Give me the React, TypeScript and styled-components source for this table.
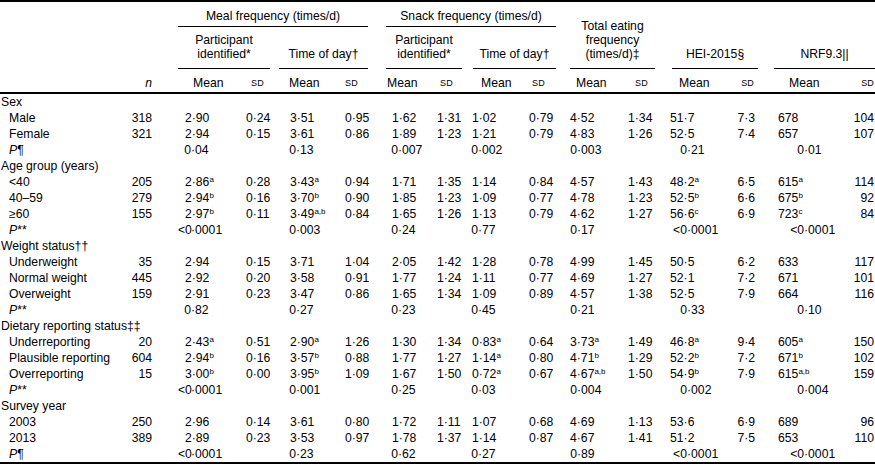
import React from "react";
import styled, { createGlobalStyle } from "styled-components";

const GlobalStyle = createGlobalStyle`
  html, body { margin: 0; padding: 0; background: #fff; }
  body { font-family: "Liberation Sans", Arial, Helvetica, sans-serif; color: #000; }
`;

const Frame = styled.div`
  width: 875px;
  border-top: 2px solid #000;
  border-bottom: 2px solid #000;
`;

const Table = styled.table`
  width: 875px;
  border-collapse: collapse;
  table-layout: fixed;
  font-size: 12.2px;
  color: #000;
`;

const Col = styled.col<{ $w: number }>`
  width: ${(p) => p.$w}px;
`;

const Head = styled.thead`
  border-bottom: 2px solid #000;
`;

const GroupTh = styled.th<{ $pt: number }>`
  padding: ${(p) => p.$pt}px 0 0 0;
  vertical-align: bottom;
  font-weight: normal;
  line-height: 14px;
  white-space: nowrap;
`;

const Ruled = styled.div<{ $ml?: number; $mr?: number; $pb?: number }>`
  margin: 0 ${(p) => p.$mr ?? 0}px 0 ${(p) => p.$ml ?? 0}px;
  padding-bottom: ${(p) => p.$pb ?? 5}px;
  border-bottom: 1px solid #000;
  text-align: center;
`;

const ColHead = styled.th<{ $pl?: number; $pr?: number; $right?: boolean }>`
  font-weight: normal;
  text-align: ${(p) => (p.$right ? "right" : "left")};
  padding: 6px ${(p) => p.$pr ?? 0}px 2px ${(p) => p.$pl ?? 0}px;
  line-height: 14px;
  white-space: nowrap;
`;

const Row = styled.tr`
  height: 16px;
`;

const Label = styled.td<{ $indent?: boolean }>`
  padding: 0 0 0 ${(p) => (p.$indent ? 9 : 1)}px;
  line-height: 16px;
  white-space: nowrap;
  text-align: left;
`;

const NCell = styled.td`
  padding: 0 26px 0 0;
  text-align: right;
  line-height: 16px;
  white-space: nowrap;
`;

const Num = styled.td<{ $pl?: number; $pr?: number; $right?: boolean }>`
  padding: 0 ${(p) => p.$pr ?? 0}px 0 ${(p) => p.$pl ?? 0}px;
  text-align: ${(p) => (p.$right ? "right" : "left")};
  line-height: 16px;
  white-space: nowrap;
`;

const PCell = styled.td<{ $pl: number }>`
  padding: 0 0 0 ${(p) => p.$pl}px;
  line-height: 16px;
  white-space: nowrap;
  text-align: left;
`;

const IntPart = styled.span<{ $w: number }>`
  display: inline-block;
  width: ${(p) => p.$w}px;
  text-align: right;
`;

const Sup = styled.sup`
  font-size: 8px;
  line-height: 0;
  vertical-align: 4px;
`;

const Caps = styled.span`
  font-size: 9px;
  letter-spacing: 0.2px;
`;

const Ital = styled.i`
  font-style: italic;
`;

const colWidths = [125, 53, 62, 39, 61, 46, 44, 40, 55, 45, 55, 45, 60, 44, 56, 45];

type Pad = { pl?: number; pr?: number; right?: boolean };

const dataPad: Pad[] = [
  { pl: 7 }, { pl: 6 }, { pl: 11 }, { pl: 5 }, { pl: 6 }, { pl: 7 }, { pl: 2 },
  { pl: 4 }, { pl: 0 }, { pl: 3 }, { pl: 0 }, { right: true, pr: 19 }, { pl: 4 },
  { right: true, pr: 1 },
];

const headPad: Pad[] = [
  { pl: 15 }, { pl: 11 }, { pl: 10 }, { pl: 5 }, { pl: 1 }, { pl: 10 }, { pl: 11 },
  { pl: 7 }, { pl: 6 }, { pl: 10 }, { pl: 9 }, { right: true, pr: 20 }, { pl: 15 },
  { right: true, pr: 1 },
];

const pPos = [
  { pl: 0, w: 13 },
  { pl: 4, w: 13 },
  { pl: 0, w: 12 },
  { pl: 0, w: 8 },
  { pl: 0, w: 7 },
  { pl: 3, w: 14 },
  { pl: 16, w: 14 },
];

type Line =
  | { kind: "section"; label: string }
  | { kind: "data"; label: string; n: string; vals: string[] }
  | { kind: "p"; mark: "¶" | "**"; vals: string[] };

const lines: Line[] = [
  { kind: "section", label: "Sex" },
  { kind: "data", label: "Male", n: "318", vals: ["2·90", "0·24", "3·51", "0·95", "1·62", "1·31", "1·02", "0·79", "4·52", "1·34", "51·7", "7·3", "678", "104"] },
  { kind: "data", label: "Female", n: "321", vals: ["2·94", "0·15", "3·61", "0·86", "1·89", "1·23", "1·21", "0·79", "4·83", "1·26", "52·5", "7·4", "657", "107"] },
  { kind: "p", mark: "¶", vals: ["0·04", "0·13", "0·007", "0·002", "0·003", "0·21", "0·01"] },
  { kind: "section", label: "Age group (years)" },
  { kind: "data", label: "<40", n: "205", vals: ["2·86^a", "0·28", "3·43^a", "0·94", "1·71", "1·35", "1·14", "0·84", "4·57", "1·43", "48·2^a", "6·5", "615^a", "114"] },
  { kind: "data", label: "40–59", n: "279", vals: ["2·94^b", "0·16", "3·70^b", "0·90", "1·85", "1·23", "1·09", "0·77", "4·78", "1·23", "52·5^b", "6·6", "675^b", "92"] },
  { kind: "data", label: "≥60", n: "155", vals: ["2·97^b", "0·11", "3·49^a,b", "0·84", "1·65", "1·26", "1·13", "0·79", "4·62", "1·27", "56·6^c", "6·9", "723^c", "84"] },
  { kind: "p", mark: "**", vals: ["<0·0001", "0·003", "0·24", "0·77", "0·17", "<0·0001", "<0·0001"] },
  { kind: "section", label: "Weight status††" },
  { kind: "data", label: "Underweight", n: "35", vals: ["2·94", "0·15", "3·71", "1·04", "2·05", "1·42", "1·28", "0·78", "4·99", "1·45", "50·5", "6·2", "633", "117"] },
  { kind: "data", label: "Normal weight", n: "445", vals: ["2·92", "0·20", "3·58", "0·91", "1·77", "1·24", "1·11", "0·77", "4·69", "1·27", "52·1", "7·2", "671", "101"] },
  { kind: "data", label: "Overweight", n: "159", vals: ["2·91", "0·23", "3·47", "0·86", "1·65", "1·34", "1·09", "0·89", "4·57", "1·38", "52·5", "7·9", "664", "116"] },
  { kind: "p", mark: "**", vals: ["0·82", "0·27", "0·23", "0·45", "0·21", "0·33", "0·10"] },
  { kind: "section", label: "Dietary reporting status‡‡" },
  { kind: "data", label: "Underreporting", n: "20", vals: ["2·43^a", "0·51", "2·90^a", "1·26", "1·30", "1·34", "0·83^a", "0·64", "3·73^a", "1·49", "46·8^a", "9·4", "605^a", "150"] },
  { kind: "data", label: "Plausible reporting", n: "604", vals: ["2·94^b", "0·16", "3·57^b", "0·88", "1·77", "1·27", "1·14^a", "0·80", "4·71^b", "1·29", "52·2^b", "7·2", "671^b", "102"] },
  { kind: "data", label: "Overreporting", n: "15", vals: ["3·00^b", "0·00", "3·95^b", "1·09", "1·67", "1·50", "0·72^a", "0·67", "4·67^a,b", "1·50", "54·9^b", "7·9", "615^a,b", "159"] },
  { kind: "p", mark: "**", vals: ["<0·0001", "0·001", "0·25", "0·03", "0·004", "0·002", "0·004"] },
  { kind: "section", label: "Survey year" },
  { kind: "data", label: "2003", n: "250", vals: ["2·96", "0·14", "3·61", "0·80", "1·72", "1·11", "1·07", "0·68", "4·69", "1·13", "53·6", "6·9", "689", "96"] },
  { kind: "data", label: "2013", n: "389", vals: ["2·89", "0·23", "3·53", "0·97", "1·78", "1·37", "1·14", "0·87", "4·67", "1·41", "51·2", "7·5", "653", "110"] },
  { kind: "p", mark: "¶", vals: ["<0·0001", "0·23", "0·62", "0·27", "0·89", "<0·0001", "<0·0001"] },
];

const Value: React.FC<{ v: string }> = ({ v }) => {
  const [main, sup] = v.split("^");
  return (
    <>
      {main}
      {sup && <Sup>{sup}</Sup>}
    </>
  );
};

const PValue: React.FC<{ v: string; w: number }> = ({ v, w }) => {
  const i = v.indexOf("·");
  return (
    <>
      <IntPart $w={w}>{v.slice(0, i)}</IntPart>
      {v.slice(i)}
    </>
  );
};

export default function App() {
  return (
    <>
      <GlobalStyle />
      <Frame>
        <Table>
          <colgroup>
            {colWidths.map((w, i) => (
              <Col key={i} $w={w} />
            ))}
          </colgroup>
          <Head>
            <tr>
              <GroupTh $pt={0} colSpan={2} rowSpan={2} />
              <GroupTh $pt={7} colSpan={4}>
                <Ruled $mr={18} $pb={3}>Meal frequency (times/d)</Ruled>
              </GroupTh>
              <GroupTh $pt={7} colSpan={4}>
                <Ruled $mr={14} $pb={3}>Snack frequency (times/d)</Ruled>
              </GroupTh>
              <GroupTh $pt={0} colSpan={2} rowSpan={2}>
                <Ruled $mr={15} $pb={7}>
                  Total eating
                  <br />
                  frequency
                  <br />
                  (times/d)‡
                </Ruled>
              </GroupTh>
              <GroupTh $pt={0} colSpan={2} rowSpan={2}>
                <Ruled $ml={2} $mr={16} $pb={7}>HEI-2015§</Ruled>
              </GroupTh>
              <GroupTh $pt={0} colSpan={2} rowSpan={2}>
                <Ruled $pb={7}>NRF9.3||</Ruled>
              </GroupTh>
            </tr>
            <tr>
              <GroupTh $pt={6} colSpan={2}>
                <Ruled $mr={9} $pb={7}>
                  Participant
                  <br />
                  identified*
                </Ruled>
              </GroupTh>
              <GroupTh $pt={6} colSpan={2}>
                <Ruled $mr={18} $pb={7}>Time of day†</Ruled>
              </GroupTh>
              <GroupTh $pt={6} colSpan={2}>
                <Ruled $mr={8} $pb={7}>
                  Participant
                  <br />
                  identified*
                </Ruled>
              </GroupTh>
              <GroupTh $pt={6} colSpan={2}>
                <Ruled $ml={3} $mr={14} $pb={7}>Time of day†</Ruled>
              </GroupTh>
            </tr>
            <tr>
              <ColHead />
              <ColHead $right $pr={26}>
                <Ital>n</Ital>
              </ColHead>
              {headPad.map((p, i) => (
                <ColHead key={i} $pl={p.pl} $pr={p.pr} $right={p.right}>
                  {i % 2 === 0 ? "Mean" : <Caps>SD</Caps>}
                </ColHead>
              ))}
            </tr>
          </Head>
          <tbody>
            {lines.map((line, r) => {
              if (line.kind === "section") {
                return (
                  <Row key={r}>
                    <Label colSpan={16}>{line.label}</Label>
                  </Row>
                );
              }
              if (line.kind === "data") {
                return (
                  <Row key={r}>
                    <Label $indent>{line.label}</Label>
                    <NCell>{line.n}</NCell>
                    {line.vals.map((v, i) => (
                      <Num key={i} $pl={dataPad[i].pl} $pr={dataPad[i].pr} $right={dataPad[i].right}>
                        <Value v={v} />
                      </Num>
                    ))}
                  </Row>
                );
              }
              return (
                <Row key={r}>
                  <Label $indent>
                    <Ital>P</Ital>
                    {line.mark}
                  </Label>
                  <NCell />
                  {line.vals.map((v, i) => (
                    <PCell key={i} colSpan={2} $pl={pPos[i].pl}>
                      <PValue v={v} w={pPos[i].w} />
                    </PCell>
                  ))}
                </Row>
              );
            })}
          </tbody>
        </Table>
      </Frame>
    </>
  );
}
